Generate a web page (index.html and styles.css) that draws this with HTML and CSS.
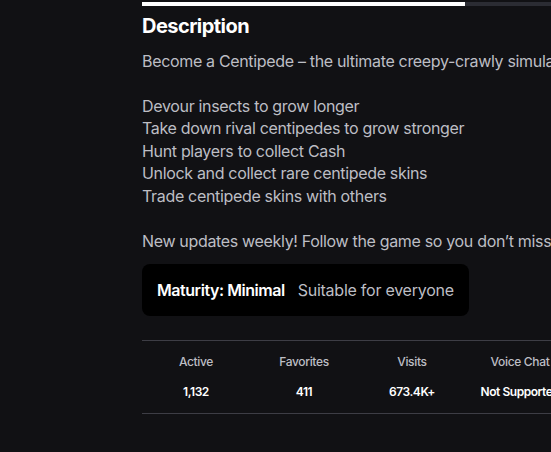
FILE: index.html
```html
<!DOCTYPE html>
<html>
<head>
<meta charset="utf-8">
<link rel="stylesheet" href="styles.css">
</head>
<body>
<div class="page">
  <div class="progress"><div class="progress-fill"></div></div>
  <h2 class="title">Description</h2>
  <p class="desc">Become a Centipede – the ultimate creepy-crawly simulator game!

Devour insects to grow longer
Take down rival centipedes to grow stronger
Hunt players to collect Cash
Unlock and collect rare centipede skins
Trade centipede skins with others

New updates weekly! Follow the game so you don’t miss out!</p>
  <div class="maturity"><span class="mat-label">Maturity: Minimal</span><span class="mat-text">Suitable for everyone</span></div>
  <div class="stats">
    <div class="stat"><div class="stat-label">Active</div><div class="stat-value">1,132</div></div>
    <div class="stat"><div class="stat-label">Favorites</div><div class="stat-value">411</div></div>
    <div class="stat"><div class="stat-label">Visits</div><div class="stat-value">673.4K+</div></div>
    <div class="stat"><div class="stat-label">Voice Chat</div><div class="stat-value">Not Supported</div></div>
    <div class="stat"><div class="stat-label">Camera</div><div class="stat-value">Not Supported</div></div>
  </div>
</div>
</body>
</html>
```
FILE: styles.css
```css
html, body {
  margin: 0;
  padding: 0;
  background: #111114;
  overflow: hidden;
}
body {
  width: 551px;
  height: 452px;
  font-family: Inter, "Noto Sans", sans-serif;
}
.page {
  padding: 2px 0 0 142px;
  width: 720px;
}
.progress {
  height: 4px;
  background: #2b2c33;
}
.progress-fill {
  width: 323px;
  height: 100%;
  background: #ffffff;
}
.title {
  margin: 7px 0 0;
  font-size: 20px;
  line-height: 26px;
  font-weight: 700;
  letter-spacing: -0.55px;
  color: #ffffff;
}
.desc {
  margin: 10.5px 0 0;
  font-size: 16px;
  line-height: 22.5px;
  letter-spacing: -0.33px;
  color: #bdbec4;
  white-space: pre-wrap;
}
.maturity {
  margin-top: 11.5px;
  display: inline-flex;
  align-items: center;
  gap: 13px;
  height: 52px;
  padding: 0 15px;
  border-radius: 8px;
  background: #000000;
  font-size: 16px;
}
.mat-label {
  color: #ffffff;
  font-weight: 600;
  letter-spacing: -0.45px;
}
.mat-text {
  color: #bdbec4;
  letter-spacing: -0.25px;
}
.stats {
  margin-top: 24px;
  border-top: 1px solid #3d3d45;
  border-bottom: 1px solid #3d3d45;
  display: flex;
  padding: 13px 0 13px;
}
.stat {
  width: 108px;
  flex: none;
  text-align: center;
  font-size: 12px;
}
.stat-label {
  color: #bdbec4;
  font-weight: 500;
  line-height: 16px;
  letter-spacing: -0.33px;
}
.stat-value {
  margin-top: 14px;
  color: #ffffff;
  font-weight: 600;
  line-height: 16px;
  letter-spacing: -0.45px;
  font-variant-numeric: proportional-nums;
}
```
